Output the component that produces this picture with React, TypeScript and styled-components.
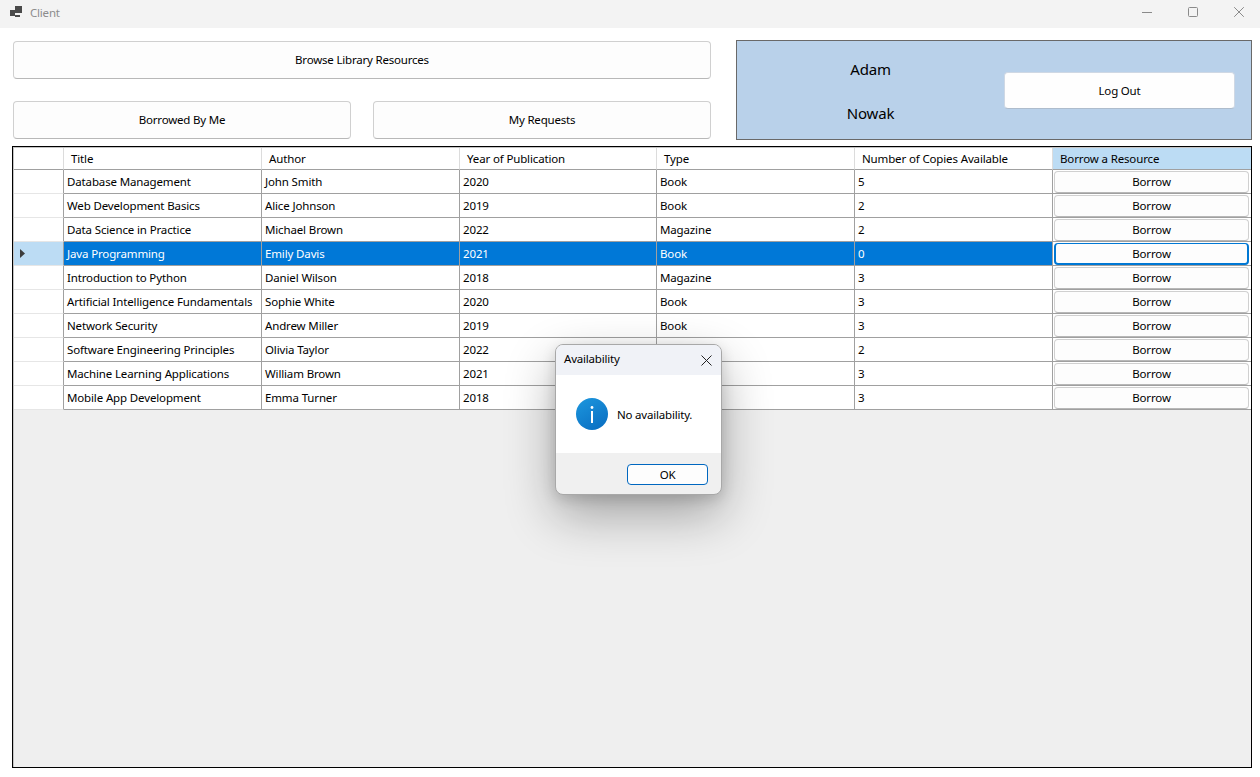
import React from "react";
import styled, { createGlobalStyle } from "styled-components";

const GlobalStyle = createGlobalStyle`
  * { box-sizing: border-box; }
  html, body { margin: 0; padding: 0; height: 100%; background: #fff; }
  body {
    font-family: "Noto Sans", "Open Sans", sans-serif;
    font-size: 11.5px;
    letter-spacing: -0.2px;
    color: #000;
    overflow: hidden;
  }
`;

const Window = styled.div`
  position: relative;
  width: 1260px;
  height: 777px;
  display: flex;
  flex-direction: column;
  background: #fff;
`;

const TitleBar = styled.div`
  height: 28px;
  flex: none;
  display: flex;
  align-items: center;
  padding: 0 0 4px 10px;
  background: #f3f3f3;
`;

const WindowTitle = styled.span`
  margin-left: 8px;
  color: #8c8c8c;
`;

const WindowControls = styled.div`
  margin-left: auto;
  display: flex;
  padding-right: 16px;
  gap: 36px;
`;

const Content = styled.main`
  flex: 1;
  min-height: 0;
  display: flex;
  flex-direction: column;
  gap: 6px;
  padding: 12px 8px 9px 12px;
`;

const TopArea = styled.section`
  flex: none;
  display: flex;
  gap: 25px;
`;

const NavColumn = styled.div`
  width: 699px;
  padding: 1px 0 0 1px;
  display: flex;
  flex-direction: column;
  gap: 22px;
`;

const NavRow = styled.div`
  display: flex;
  gap: 22px;
`;

const NavButton = styled.button`
  flex: 1;
  height: 38px;
  padding: 0 0 2px;
  font: inherit;
  letter-spacing: inherit;
  color: #000;
  background: #fdfdfd;
  border: 1px solid #d0d0d0;
  border-bottom-color: #b8b8b8;
  border-radius: 4px;
`;

const UserPanel = styled.div`
  width: 516px;
  height: 100px;
  display: flex;
  align-items: center;
  padding-right: 16px;
  background: #b9d1ea;
  border: 1px solid #696969;
`;

const NameColumn = styled.div`
  flex: 1;
  display: flex;
  flex-direction: column;
  align-items: center;
  gap: 24px;
  padding-top: 1px;
`;

const NameLabel = styled.span`
  font-size: 15px;
  line-height: 20px;
`;

const LogOutButton = styled.button`
  width: 231px;
  height: 37px;
  padding: 0;
  font: inherit;
  letter-spacing: inherit;
  color: #000;
  background: #fefefe;
  border: 1px solid #cfd8e4;
  border-bottom-color: #aebccc;
  border-radius: 4px;
`;

const GridFrame = styled.div`
  flex: 1;
  min-height: 0;
  padding: 1px 0 0 1px;
  background: #efefef;
  border: 1px solid #000;
  box-shadow: inset 1px 1px 0 #c4c4c4;
`;

const Table = styled.table`
  width: 1237px;
  table-layout: fixed;
  border-collapse: separate;
  border-spacing: 0;
  letter-spacing: -0.14px;
  background: #fff;
`;

const HeaderCell = styled.th<{ $active?: boolean }>`
  height: 22px;
  padding: 0 0 1px 7px;
  font-weight: 400;
  text-align: left;
  white-space: nowrap;
  background: ${(p) => (p.$active ? "#bcdcf4" : "#fff")};
  border-right: 1px solid #dcdcdc;
  border-bottom: 1px solid #a0a0a0;
  &:last-child { border-right: none; }
`;

const RowHeader = styled.td<{ $selected?: boolean }>`
  height: 24px;
  padding: 0 0 0 6px;
  background: ${(p) => (p.$selected ? "#bcdcf4" : "#fff")};
  border-right: 1px solid #a0a0a0;
  border-bottom: 1px solid #e6e6e6;
  line-height: 0;
`;

const Cell = styled.td<{ $selected?: boolean }>`
  height: 24px;
  padding: 0 0 0 3px;
  line-height: 14px;
  white-space: nowrap;
  overflow: hidden;
  color: ${(p) => (p.$selected ? "#fff" : "#000")};
  background: ${(p) => (p.$selected ? "#0078d7" : "#fff")};
  border-right: 1px solid #a0a0a0;
  border-bottom: 1px solid #a0a0a0;
`;

const ActionCell = styled.td`
  height: 24px;
  padding: 1px 2px 0 1px;
  background: #fff;
  border-bottom: 1px solid #a0a0a0;
`;

const BorrowButton = styled.button<{ $focused?: boolean }>`
  display: block;
  width: 100%;
  height: 22px;
  padding: ${(p) => (p.$focused ? "0" : "0 0 2px")};
  font: inherit;
  letter-spacing: inherit;
  color: #000;
  background: #fdfdfd;
  border-radius: 4px;
  border-style: solid;
  border-width: ${(p) => (p.$focused ? "1px 2px 2px" : "1px")};
  border-color: ${(p) => (p.$focused ? "#0078d4" : "#d0d0d0 #d0d0d0 #b8b8b8")};
`;

const Dialog = styled.div`
  position: absolute;
  left: 555px;
  top: 344px;
  width: 167px;
  height: 151px;
  display: flex;
  flex-direction: column;
  overflow: hidden;
  border-radius: 8px;
  border: 1px solid #a8a8a8;
  background: #f0f0f0;
  box-shadow: 0 20px 50px rgba(0, 0, 0, 0.32), 0 4px 14px rgba(0, 0, 0, 0.14);
`;

const DialogHeader = styled.div`
  height: 30px;
  flex: none;
  display: flex;
  align-items: center;
  justify-content: space-between;
  padding: 0 9px 0 8px;
  background: #f0f2f7;
`;

const DialogTitle = styled.span`
  margin-top: -3px;
`;

const DialogBody = styled.div`
  height: 78px;
  flex: none;
  display: flex;
  align-items: center;
  gap: 9px;
  padding: 0 0 0 20px;
  background: #fff;
`;

const DialogFooter = styled.div`
  flex: 1;
  display: flex;
  justify-content: flex-end;
  align-items: flex-start;
  padding: 11px 13px 0 0;
`;

const OkButton = styled.button`
  width: 81px;
  height: 21px;
  padding: 0;
  font: inherit;
  letter-spacing: inherit;
  color: #000;
  background: #fdfdfd;
  border: 1px solid #0067c0;
  border-radius: 4px;
`;

type Resource = { title: string; author: string; year: number; type: string; copies: number };

// the last three types sit behind the dialog in the screenshot, so they stay empty
const resources: Resource[] = [
  { title: "Database Management", author: "John Smith", year: 2020, type: "Book", copies: 5 },
  { title: "Web Development Basics", author: "Alice Johnson", year: 2019, type: "Book", copies: 2 },
  { title: "Data Science in Practice", author: "Michael Brown", year: 2022, type: "Magazine", copies: 2 },
  { title: "Java Programming", author: "Emily Davis", year: 2021, type: "Book", copies: 0 },
  { title: "Introduction to Python", author: "Daniel Wilson", year: 2018, type: "Magazine", copies: 3 },
  { title: "Artificial Intelligence Fundamentals", author: "Sophie White", year: 2020, type: "Book", copies: 3 },
  { title: "Network Security", author: "Andrew Miller", year: 2019, type: "Book", copies: 3 },
  { title: "Software Engineering Principles", author: "Olivia Taylor", year: 2022, type: "", copies: 2 },
  { title: "Machine Learning Applications", author: "William Brown", year: 2021, type: "", copies: 3 },
  { title: "Mobile App Development", author: "Emma Turner", year: 2018, type: "", copies: 3 },
];

const SELECTED = 3;

const AppIcon = () => (
  <svg width="12" height="12" viewBox="0 0 12 12" fill="#4a4a4a">
    <rect x="0" y="4" width="5" height="6" />
    <rect x="5" y="0" width="7" height="7" />
    <rect x="5" y="9" width="5" height="2" />
  </svg>
);

const Controls = () => (
  <WindowControls>
    <svg width="10" height="10" viewBox="0 0 10 10" stroke="#8a8a8a" fill="none">
      <path d="M0 5.5h10" />
    </svg>
    <svg width="10" height="10" viewBox="0 0 10 10" stroke="#8a8a8a" fill="none">
      <rect x="0.5" y="0.5" width="9" height="9" rx="1" />
    </svg>
    <svg width="10" height="10" viewBox="0 0 10 10" stroke="#8a8a8a" fill="none">
      <path d="M0.2 0.2l9.6 9.6M9.8 0.2L0.2 9.8" />
    </svg>
  </WindowControls>
);

const InfoIcon = () => (
  <svg width="32" height="32" viewBox="0 0 32 32">
    <defs>
      <linearGradient id="infoFill" x1="0.2" y1="0" x2="0.8" y2="1">
        <stop offset="0" stopColor="#1b94dc" />
        <stop offset="1" stopColor="#0a6fc2" />
      </linearGradient>
    </defs>
    <circle cx="16" cy="16" r="16" fill="url(#infoFill)" />
    <rect x="15" y="13" width="2" height="12" fill="#fff" />
    <circle cx="16" cy="9.5" r="1.4" fill="#fff" />
  </svg>
);

export default function App() {
  return (
    <>
      <GlobalStyle />
      <Window>
        <TitleBar>
          <AppIcon />
          <WindowTitle>Client</WindowTitle>
          <Controls />
        </TitleBar>
        <Content>
          <TopArea>
            <NavColumn>
              <NavRow>
                <NavButton>Browse Library Resources</NavButton>
              </NavRow>
              <NavRow>
                <NavButton>Borrowed By Me</NavButton>
                <NavButton>My Requests</NavButton>
              </NavRow>
            </NavColumn>
            <UserPanel>
              <NameColumn>
                <NameLabel>Adam</NameLabel>
                <NameLabel>Nowak</NameLabel>
              </NameColumn>
              <LogOutButton>Log Out</LogOutButton>
            </UserPanel>
          </TopArea>
          <GridFrame>
            <Table>
              <colgroup>
                <col width={50} />
                <col width={198} />
                <col width={198} />
                <col width={197} />
                <col width={198} />
                <col width={198} />
                <col width={198} />
              </colgroup>
              <thead>
                <tr>
                  <HeaderCell />
                  <HeaderCell>Title</HeaderCell>
                  <HeaderCell>Author</HeaderCell>
                  <HeaderCell>Year of Publication</HeaderCell>
                  <HeaderCell>Type</HeaderCell>
                  <HeaderCell>Number of Copies Available</HeaderCell>
                  <HeaderCell $active>Borrow a Resource</HeaderCell>
                </tr>
              </thead>
              <tbody>
                {resources.map((r, i) => {
                  const selected = i === SELECTED;
                  return (
                    <tr key={r.title}>
                      <RowHeader $selected={selected}>
                        {selected && (
                          <svg width="5" height="9" viewBox="0 0 5 9">
                            <path d="M0 0l5 4.5L0 9z" fill="#3c3c3c" />
                          </svg>
                        )}
                      </RowHeader>
                      <Cell $selected={selected}>{r.title}</Cell>
                      <Cell $selected={selected}>{r.author}</Cell>
                      <Cell $selected={selected}>{r.year}</Cell>
                      <Cell $selected={selected}>{r.type}</Cell>
                      <Cell $selected={selected}>{r.copies}</Cell>
                      <ActionCell>
                        <BorrowButton $focused={selected}>Borrow</BorrowButton>
                      </ActionCell>
                    </tr>
                  );
                })}
              </tbody>
            </Table>
          </GridFrame>
        </Content>
        <Dialog>
          <DialogHeader>
            <DialogTitle>Availability</DialogTitle>
            <svg width="11" height="11" viewBox="0 0 11 11" stroke="#222" fill="none">
              <path d="M0.5 0.5l10 10M10.5 0.5l-10 10" />
            </svg>
          </DialogHeader>
          <DialogBody>
            <InfoIcon />
            <span>No availability.</span>
          </DialogBody>
          <DialogFooter>
            <OkButton>OK</OkButton>
          </DialogFooter>
        </Dialog>
      </Window>
    </>
  );
}
